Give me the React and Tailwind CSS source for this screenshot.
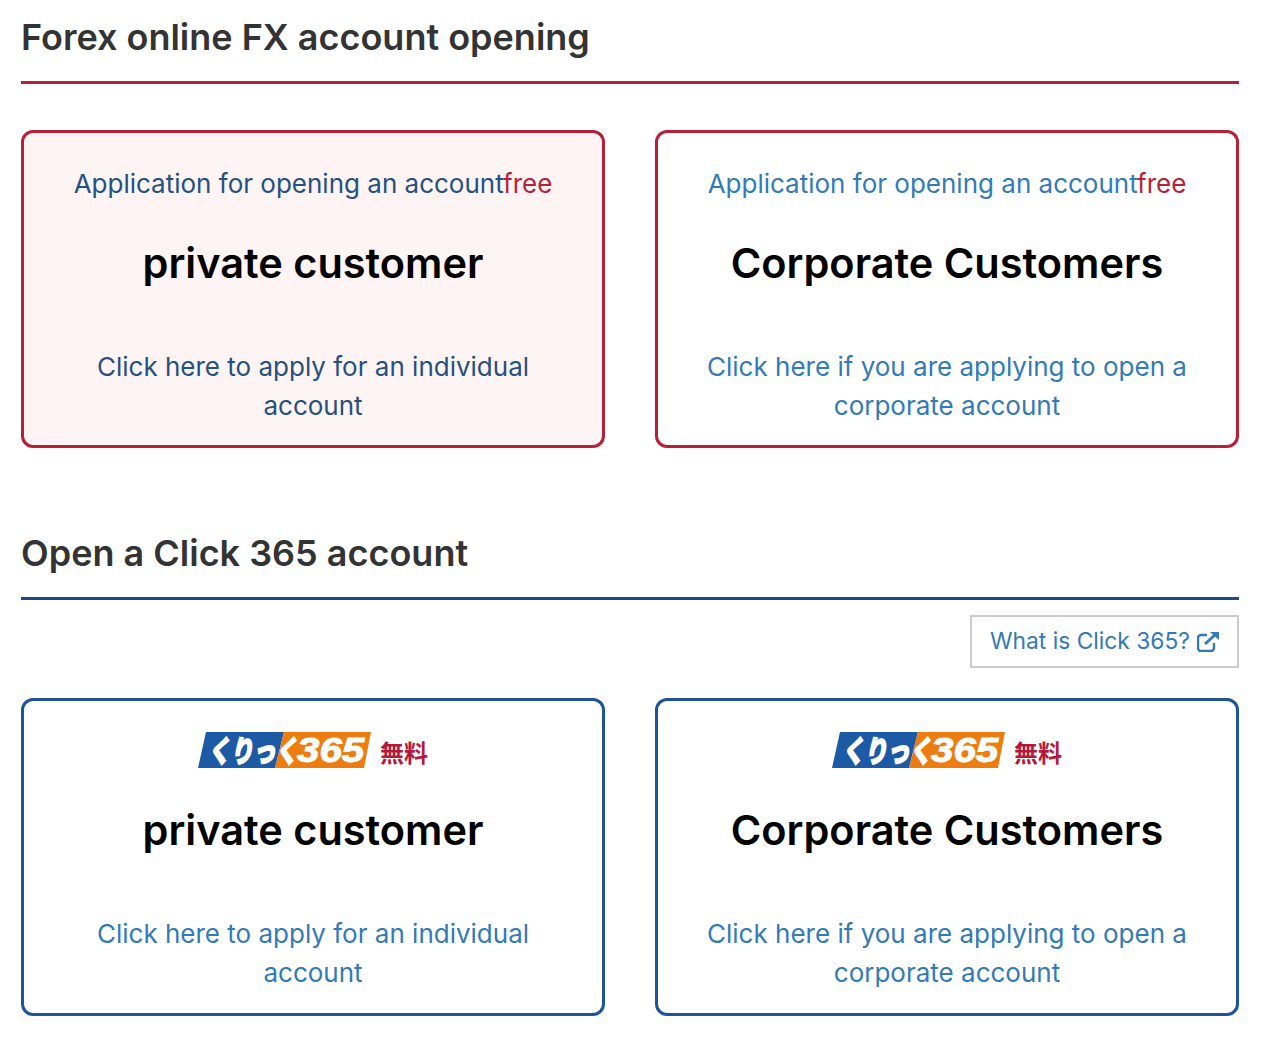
import React from "react";

function Logo() {
  return (
    <div className="flex items-center justify-center h-[38px] gap-[8px]">
      <svg width="174" height="38" viewBox="0 0 174 38" className="block overflow-visible">
        <polygon points="8,1 86,1 77,37 0,37" fill="#1c5aa6" />
        <polygon points="86,1 173,1 166,37 77,37" fill="#ee7d11" />
        <text transform="translate(10 31) skewX(-10) scale(0.75 1)" fontSize="30" fontWeight="900" fill="#fff" stroke="#fff" strokeWidth="1.6" fontFamily="'Noto Sans CJK JP', sans-serif">くりっく</text>
        <text transform="translate(99 31) scale(1.12 1)" fontSize="36" fontWeight="700" fontStyle="italic" fill="#fff" stroke="#fff" strokeWidth="1" fontFamily="'Liberation Sans', sans-serif">365</text>
      </svg>
      <span className="mt-[4px] text-[#b8173a] text-[24px] leading-none font-bold font-['Noto_Sans_CJK_JP',sans-serif]">無料</span>
    </div>
  );
}

function Card({ top, title, body, tone, pink }) {
  const isRed = tone === "red";
  return (
    <a className={`block h-[318px] rounded-[12px] border-[3px] text-center ${isRed ? "border-[#b8203a]" : "border-[#1c5599]"} ${pink ? "bg-[#fff4f4]" : "bg-white"}`}>
      <div className={`flex items-end justify-center ${isRed ? "h-[63px]" : "h-[68px]"}`}>{top}</div>
      <h3 className={`text-[41.5px] leading-[48px] font-semibold text-black ${isRed ? "mt-[43px]" : "mt-[37px]"}`}>{title}</h3>
      <p className={`mt-[60px] mx-[40px] text-[26px] leading-[39px] ${pink ? "text-[#24517f]" : "text-[#337ab7]"}`}>{body}</p>
    </a>
  );
}

function AppLine({ pink }) {
  return (
    <p className={`text-[26px] leading-[39px] mb-[-7px] ${pink ? "text-[#24517f]" : "text-[#337ab7]"}`}>
      Application for opening an account<span className="text-[#b8203a]">free</span>
    </p>
  );
}

export default function App() {
  return (
    <div className="w-[1269px] h-[1044px] bg-white overflow-hidden pl-[21px] pr-[30px] font-['Inter',sans-serif]">
      <h2 className="pt-[15px] h-[84px] border-b-[3px] border-[#b8203a] text-[36px] leading-[44px] font-semibold text-[#333]">Forex online FX account opening</h2>
      <div className="grid grid-cols-2 gap-[50px] mt-[46px]">
        <Card pink tone="red" top={<AppLine pink />} title="private customer" body="Click here to apply for an individual account" />
        <Card tone="red" top={<AppLine />} title="Corporate Customers" body="Click here if you are applying to open a corporate account" />
      </div>
      <h2 className="mt-[83px] h-[69px] border-b-[3px] border-[#1c4a7c] text-[36px] leading-[44px] font-semibold text-[#333]">Open a Click 365 account</h2>
      <div className="flex justify-end mt-[15px]">
        <a className="flex items-center h-[53px] pl-[18px] pr-[17px] border-2 border-[#ccc] text-[22.8px] text-[#337ab7] gap-[7px]">
          What is Click 365?
          <svg width="23" height="21" viewBox="0 0 23 21" fill="none" stroke="#337ab7" strokeWidth="2.4">
            <path d="M17 12v5a3 3 0 0 1-3 3H4a3 3 0 0 1-3-3V7a3 3 0 0 1 3-3h6" />
            <path d="M8 13 20 2" strokeWidth="3" />
            <path d="M13 1h9v8z" fill="#337ab7" stroke="none" />
          </svg>
        </a>
      </div>
      <div className="grid grid-cols-2 gap-[50px] mt-[30px]">
        <Card tone="blue" top={<Logo />} title="private customer" body="Click here to apply for an individual account" />
        <Card tone="blue" top={<Logo />} title="Corporate Customers" body="Click here if you are applying to open a corporate account" />
      </div>
    </div>
  );
}
